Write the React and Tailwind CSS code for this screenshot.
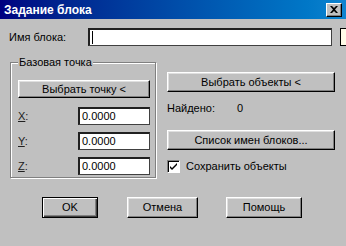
import React from 'react';

const font = { fontFamily: '"Liberation Sans", Arial, sans-serif' };

function Button({ children, className = '', isDefault = false }) {
  return (
    <div
      className={`flex items-center justify-center bg-[#c0c0c0] text-[11px] text-black ${
        isDefault
          ? 'border border-black shadow-[inset_1px_1px_0_#fff,inset_-1px_-1px_0_#404040,inset_-2px_-2px_0_#808080]'
          : 'border-t border-l border-t-white border-l-white border-r border-b border-r-black border-b-black shadow-[inset_-1px_-1px_0_#808080,inset_1px_1px_0_#dfdfdf]'
      } ${className}`}
    >
      {children}
    </div>
  );
}

function Field({ value, className = '' }) {
  return (
    <div
      className={`flex items-center bg-white border-t-2 border-l-2 border-t-[#202020] border-l-[#202020] border-r border-b border-r-[#404040] border-b-[#404040] pl-[2px] text-[11px] text-black ${className}`}
    >
      {value}
    </div>
  );
}

function CoordRow({ letter, value }) {
  return (
    <div className="flex items-center h-[18px]">
      <span className="w-[60px] text-[11px] text-[#202020]">
        <span className="underline">{letter}</span>:
      </span>
      <Field value={value} className="w-[72px] h-[18px]" />
    </div>
  );
}

export default function App() {
  return (
    <div className="w-[346px] h-[246px] bg-[#c0c0c0] flex flex-col overflow-hidden" style={font}>
      {/* Title bar */}
      <div className="h-[19px] flex items-center justify-between bg-gradient-to-r from-[#000080] to-[#1084d0] pl-[4px] pr-[4px]">
        <span className="text-white font-bold text-[12px] leading-none">Задание блока</span>
        <div className="w-[16px] h-[14px] flex items-center justify-center bg-[#c0c0c0] border-t border-l border-t-white border-l-white border-r border-b border-r-black border-b-black shadow-[inset_-1px_-1px_0_#808080]">
          <svg width="8" height="7" viewBox="0 0 8 7">
            <path d="M0 0h2l2 2 2-2h2L5 3.5 8 7H6L4 5 2 7H0l3-3.5z" fill="#000" />
          </svg>
        </div>
      </div>

      {/* Block name */}
      <div className="flex items-center mt-[9px] h-[18px]">
        <span className="ml-[9px] w-[80px] text-[11px] text-black">Имя блока:</span>
        <Field value={<span className="w-px h-[13px] bg-black" />} className="w-[246px] h-[18px]" />
        <div className="ml-[8px] w-[6px] h-[18px] bg-[#fffbe8] border-t border-l border-b border-black" />
      </div>

      {/* Main area */}
      <div className="flex items-start mt-[16px]">
        {/* Base point group */}
        <div className="relative ml-[10px] w-[146px] h-[116px] border border-[#808080] shadow-[inset_1px_1px_0_#fff,1px_1px_0_#fff] pl-[7px] pt-[17px]">
          <span className="absolute left-[7px] top-[-8px] px-[1px] bg-[#c0c0c0] text-[11px] text-black leading-[14px]">
            Базовая точка
          </span>
          <Button className="w-[132px] h-[18px]">Выбрать точку &lt;</Button>
          <div className="mt-[9px] flex flex-col gap-[7px]">
            <CoordRow letter="X" value="0.0000" />
            <CoordRow letter="Y" value="0.0000" />
            <CoordRow letter="Z" value="0.0000" />
          </div>
        </div>

        {/* Right column */}
        <div className="ml-[11px] w-[168px] flex flex-col pt-[10px]">
          <Button className="w-[168px] h-[20px]">Выбрать объекты &lt;</Button>
          <div className="mt-[9px] h-[14px] flex items-center text-[11px] text-black">
            <span className="w-[70px]">Найдено:</span>
            <span>0</span>
          </div>
          <Button className="mt-[15px] w-[168px] h-[20px]">Список имен блоков...</Button>
          <div className="mt-[10px] flex items-center h-[13px]">
            <div className="w-[13px] h-[13px] bg-white border-t border-l border-t-[#808080] border-l-[#808080] border-r border-b border-r-white border-b-white shadow-[inset_1px_1px_0_#000] flex items-center justify-center">
              <svg width="9" height="9" viewBox="0 0 9 9">
                <path d="M1 4l2 2 5-5v2L3 8 1 6z" fill="#000" />
              </svg>
            </div>
            <span className="ml-[6px] text-[11px] text-black">Сохранить объекты</span>
          </div>
        </div>
      </div>

      {/* Bottom buttons */}
      <div className="flex mt-[19px]">
        <Button isDefault className="ml-[42px] w-[56px] h-[21px]">OK</Button>
        <Button className="ml-[29px] w-[71px] h-[21px]">Отмена</Button>
        <Button className="ml-[28px] w-[76px] h-[21px]">Помощь</Button>
      </div>
    </div>
  );
}
